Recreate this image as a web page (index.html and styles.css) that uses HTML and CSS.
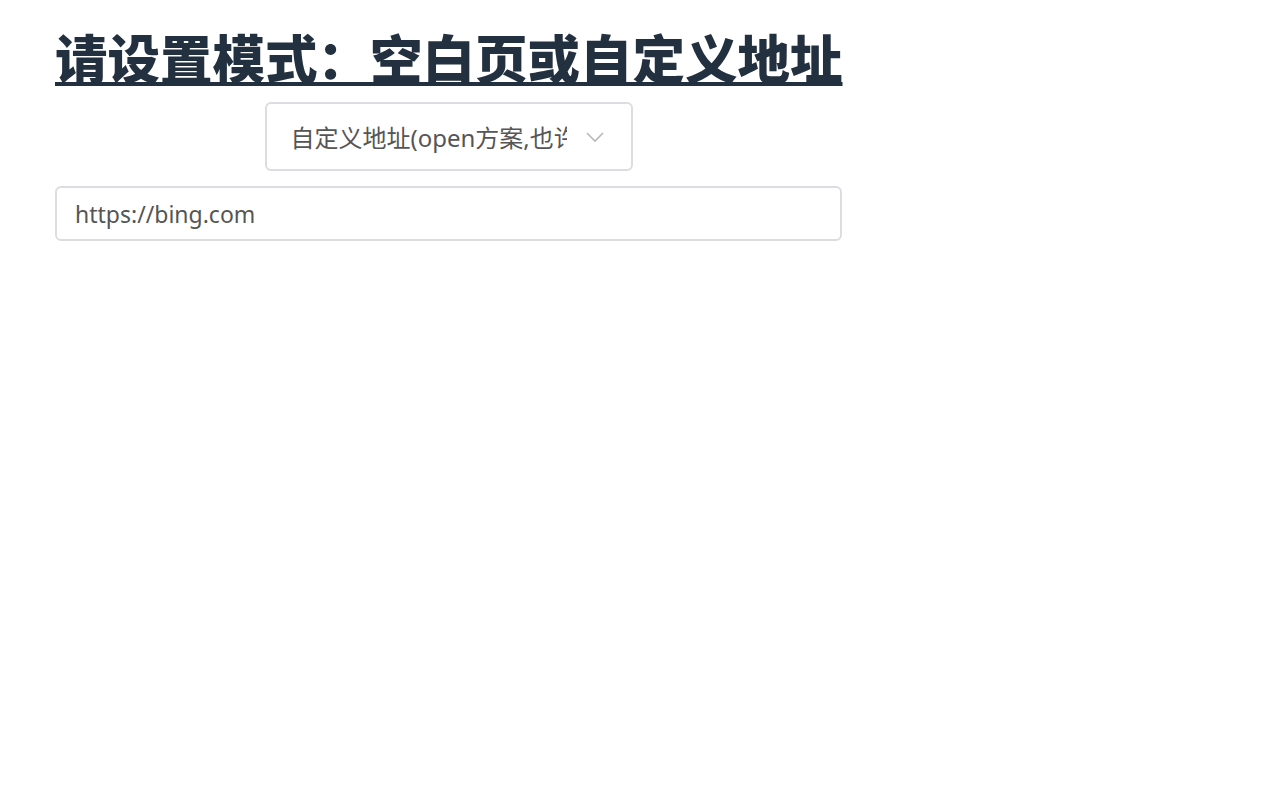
FILE: index.html
```html
<!DOCTYPE html>
<html lang="zh-CN">
<head>
    <meta charset="UTF-8">
    <meta name="viewport" content="width=device-width, initial-scale=1.0">
    <title>设置</title>
    <link rel="stylesheet" href="styles.css">
</head>
<body>
    <div class="settings">
        <h1 class="title">请设置模式：空白页或自定义地址</h1>
        <div class="mode-row">
            <div class="mode-select">
                <span class="mode-text">自定义地址(open方案,也许会被拦截)</span>
                <svg class="chevron" width="20" height="12" viewBox="0 0 20 12">
                    <path d="M2 2 L10 10 L18 2" fill="none" stroke="#b8b8b8" stroke-width="1.6"/>
                </svg>
            </div>
        </div>
        <input class="url-input" type="text" value="https://bing.com">
    </div>
</body>
</html>
```

FILE: styles.css
```css
body {
    margin: 0;
    padding: 0;
    background: #fff;
    font-family: "Noto Sans", "Noto Sans CJK SC", sans-serif;
}

.settings {
    width: 787px;
    padding: 28px 0 0 55px;
}

.title {
    margin: 0;
    font-size: 52.5px;
    line-height: 62px;
    font-weight: 800;
    color: #22303f;
    text-decoration: underline;
    text-decoration-thickness: 4px;
    text-underline-offset: 3px;
    white-space: nowrap;
}

.mode-row {
    display: flex;
    justify-content: center;
    margin-top: 12px;
}

.mode-select {
    box-sizing: border-box;
    width: 368px;
    height: 69px;
    border: 2px solid #dcdde1;
    border-radius: 6px;
    display: flex;
    align-items: center;
    padding: 0 26px 0 24px;
    gap: 18px;
}

.mode-text {
    flex: 1;
    overflow: hidden;
    white-space: nowrap;
    font-size: 24px;
    color: #555;
}

.chevron {
    flex: none;
}

.url-input {
    display: block;
    box-sizing: border-box;
    width: 787px;
    height: 55px;
    margin-top: 15px;
    border: 2px solid #dcdde1;
    border-radius: 6px;
    padding: 0 18px;
    font-family: "Noto Sans", "Noto Sans CJK SC", sans-serif;
    font-size: 23px;
    color: #555;
    outline: none;
}
```
